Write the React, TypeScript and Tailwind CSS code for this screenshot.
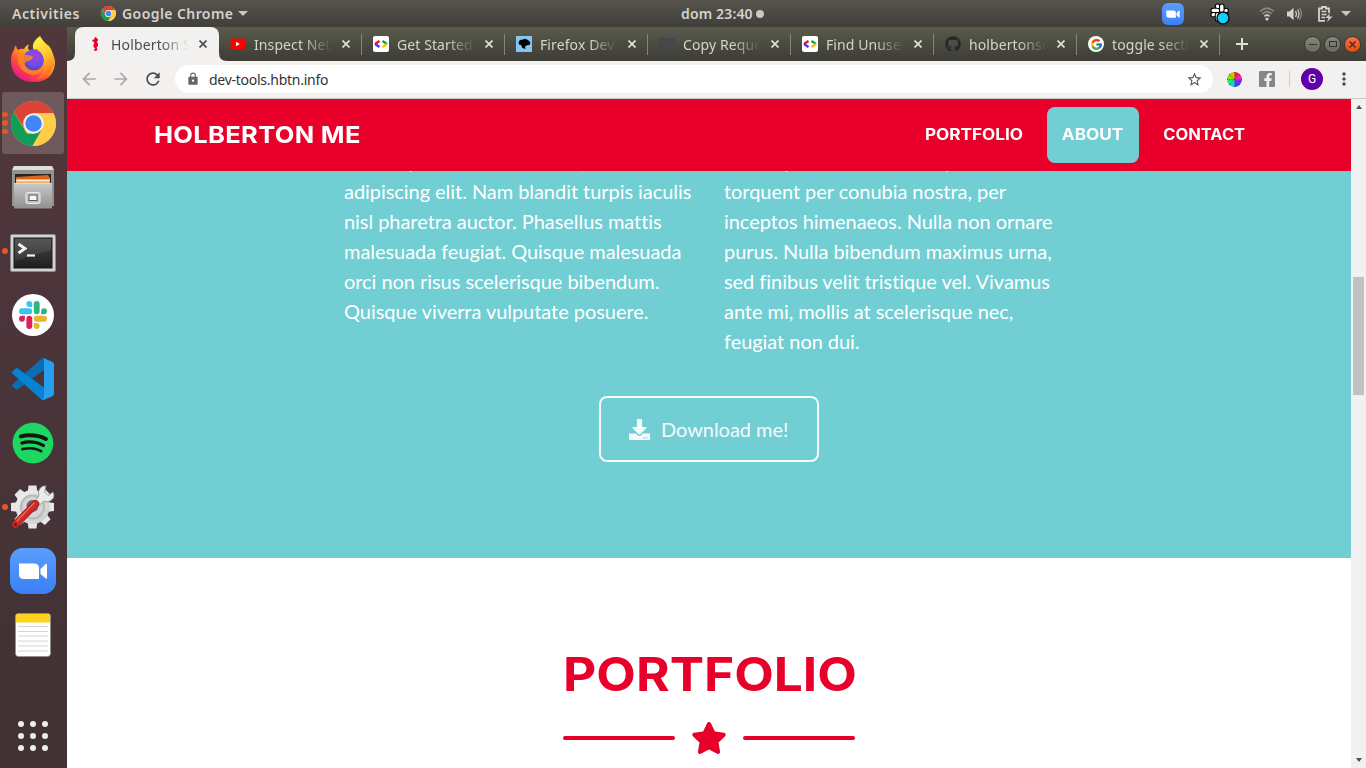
import React from "react";
import { FaDownload, FaStar, FaGithub, FaSpotify, FaFacebookF } from "react-icons/fa";
import { MdArrowBack, MdArrowForward, MdRefresh, MdLock, MdStarBorder, MdMoreVert } from "react-icons/md";
import { FcGoogle } from "react-icons/fc";

const SLACK =
  "M8.834 5.042a2.528 2.528 0 0 1-2.521-2.52A2.528 2.528 0 0 1 8.834 0a2.528 2.528 0 0 1 2.521 2.522v2.52H8.834zM8.834 6.313a2.528 2.528 0 0 1 2.521 2.521 2.528 2.528 0 0 1-2.521 2.521H2.522A2.528 2.528 0 0 1 0 8.834a2.528 2.528 0 0 1 2.522-2.521h6.312z";

function ChromeLogo({ className }: { className: string }) {
  return (
    <svg viewBox="0 0 48 48" className={className}>
      <circle cx="24" cy="24" r="24" fill="#ffcd46" />
      <path d="M3.2 12A24 24 0 0 1 44.8 12L45.3 13H24L14.5 29.5Z" fill="#db4437" />
      <path d="M3.2 12A24 24 0 0 0 23 48L33.5 29.5L24 35H17L3.2 12Z" fill="#0f9d58" />
      <path d="M24 13H45.3A24 24 0 0 1 23 48L33.5 29.5Z" fill="#ffcd46" />
      <circle cx="24" cy="24" r="11" fill="#f1f1f1" />
      <circle cx="24" cy="24" r="8.8" fill="#4285f4" />
    </svg>
  );
}

function FirefoxLogo() {
  return (
    <svg viewBox="0 0 46 48" className="h-12 w-[46px]">
      <defs>
        <linearGradient id="ffBody" x1="0.85" y1="0.1" x2="0.2" y2="0.95">
          <stop offset="0" stopColor="#fff44f" />
          <stop offset="0.35" stopColor="#ffa61c" />
          <stop offset="0.65" stopColor="#ff4f3a" />
          <stop offset="1" stopColor="#e3128d" />
        </linearGradient>
        <radialGradient id="ffGlobe" cx="0.6" cy="0.3" r="0.8">
          <stop offset="0" stopColor="#a040e0" />
          <stop offset="0.6" stopColor="#6c4fe8" />
          <stop offset="1" stopColor="#4a3aa8" />
        </radialGradient>
        <linearGradient id="ffTail" x1="0.3" y1="0" x2="0.6" y2="1">
          <stop offset="0" stopColor="#fff34a" />
          <stop offset="0.45" stopColor="#ffcc2d" />
          <stop offset="0.8" stopColor="#ff8a25" />
          <stop offset="1" stopColor="#ff5238" />
        </linearGradient>
      </defs>
      <path d="M6 10.500Q6.500 14 8 15Q11 13 14 14Q16 10 19 9.500Q17 13 19 15L37 14Q44 19 45 27Q44 47 23 47Q1 46 1 25Q1 19 4 15Q4 12 6 10.500Z" fill="url(#ffBody)" />
      <circle cx="23.500" cy="25" r="10.500" fill="url(#ffGlobe)" />
      <path d="M30 1Q34 8 39 11Q42 15 43 19Q45 24 44.500 28Q41 42 27 44Q37 36 34 25Q33 18 27 14Q22 16 23 10Q24 5 30 1Z" fill="url(#ffTail)" />
      <path d="M8 19Q12 17 16 20Q21 20 23 21.500Q23 25 18 26Q14 27 15 30Q18 35.500 25 35.500Q31 35 33.500 31Q33 39 23 40Q10 38 8 27Z" fill="#ff8524" opacity="0.850" />
    </svg>
  );
}

function FilesLogo() {
  return (
    <svg viewBox="0 0 44 46" className="h-[46px] w-11">
      <defs>
        <linearGradient id="cabinet" x1="0" y1="0" x2="0" y2="1">
          <stop offset="0" stopColor="#c8c8c8" />
          <stop offset="1" stopColor="#919191" />
        </linearGradient>
      </defs>
      <path d="M3 2H41L43 5V42H1V5Z" fill="#929292" />
      <path d="M3 2H41L42.500 6H1.500Z" fill="#dedede" />
      <rect x="4" y="10" width="36" height="10" fill="#292522" />
      <path d="M5 13L37 11L39 14V18H5Z" fill="#d9661f" />
      <path d="M5 15H39V20H5Z" fill="#f5ae62" />
      <rect x="6" y="16" width="32" height="1.200" fill="#fff1d8" />
      <rect x="3" y="19" width="38" height="25.500" rx="1" fill="url(#cabinet)" />
      <path d="M3.500 19.500H40.500" stroke="#ddd" />
      <rect x="15" y="28.500" width="14" height="11" rx="1.500" fill="#c5c5c5" stroke="#ececec" />
      <rect x="18" y="31" width="8" height="5.500" fill="#f5f5f5" stroke="#555" />
    </svg>
  );
}

function TerminalLogo() {
  return (
    <svg viewBox="0 0 46 38" className="mt-1 h-[38px] w-[46px]">
      <defs>
        <linearGradient id="term" x1="0" y1="0" x2="0" y2="1">
          <stop offset="0" stopColor="#4a4a4a" />
          <stop offset="1" stopColor="#1d1d1d" />
        </linearGradient>
      </defs>
      <rect x="0.500" y="0.500" width="45" height="37" rx="1.500" fill="#d2d2d2" stroke="#8d8d8d" />
      <rect x="4" y="4" width="38" height="30" fill="url(#term)" stroke="#191919" />
      <path d="M5 5H41V16L5 27Z" fill="#ffffff" opacity="0.080" />
      <path d="M8.500 10L15 14.500L8.500 19" fill="none" stroke="#f3f3f3" strokeWidth="2.800" />
      <path d="M17 21.500H25" stroke="#f3f3f3" strokeWidth="2.200" />
    </svg>
  );
}

function SlackLogo() {
  const petals = [
    { color: "#36c5f0", turn: "rotate(0 12 12)" },
    { color: "#2eb67d", turn: "rotate(90 12 12)" },
    { color: "#ecb22e", turn: "rotate(180 12 12)" },
    { color: "#e01e5a", turn: "rotate(270 12 12)" },
  ];
  return (
    <div className="flex size-[42px] items-center justify-center rounded-full bg-white">
      <svg viewBox="0 0 24 24" className="size-7">
        {petals.map((p) => (
          <path key={p.color} d={SLACK} fill={p.color} transform={p.turn} />
        ))}
      </svg>
    </div>
  );
}

function CodeLogo() {
  return (
    <svg viewBox="0 0 42 42" className="size-[42px]">
      <path d="M0.500 13.500L4 10.500Q5 10 6 10.700L34 31V41L31 42Q30 42 29 41L0.500 15.500Q-0.300 14.500 0.500 13.500Z" fill="#0179cb" />
      <path d="M0.500 28.500L4 31.500Q5 32 6 31.300L34 10.500V1L31 0Q30 0 29 1L0.500 26.500Q-0.300 27.500 0.500 28.500Z" fill="#0b6cb0" />
      <path d="M0.500 13.500L4 10.500Q5 10 6 10.700L34 31V41L31 42Q30 42 29 41L0.500 15.500Q-0.300 14.500 0.500 13.500Z" fill="#0683d3" />
      <path d="M32 0.300L40.500 4Q42 5 42 6V36Q42 37.500 40.500 38.200L32 41.700Q31 42 30.500 41.500Q32 40.500 32 39Z" fill="#259fee" />
    </svg>
  );
}

function SettingsLogo() {
  const teeth = [0, 45, 90, 135, 180, 225, 270, 315];
  return (
    <svg viewBox="0 0 46 46" className="size-[46px]">
      <defs>
        <linearGradient id="gear" x1="0" y1="0" x2="1" y2="1">
          <stop offset="0" stopColor="#f4f4f4" />
          <stop offset="1" stopColor="#c9c9c9" />
        </linearGradient>
      </defs>
      {teeth.map((t) => (
        <path key={t} d="M17.500 9L18.500 1.500H26.500L27.500 9Z" fill="#e6e6e6" transform={`rotate(${t} 22.500 23)`} />
      ))}
      <circle cx="22.500" cy="23" r="17" fill="url(#gear)" />
      <circle cx="22.500" cy="23" r="11.500" fill="#d6d6d6" stroke="#bcbcbc" strokeWidth="2.500" />
      <circle cx="22.500" cy="22" r="6" fill="#6a6163" />
      <path d="M20 22L29 12Q27 5 33 2L36 2L34.500 8L38 11.500L43 8Q46 14 40 17Q37 19 34 17L24 26Z" fill="#ebebeb" stroke="#8b8b8b" strokeWidth="0.800" />
      <path d="M5.500 40.500L25.500 20" stroke="#8f1717" strokeWidth="7.500" strokeLinecap="round" />
      <path d="M5.500 40.500L25.500 20" stroke="#cf2a26" strokeWidth="6.200" strokeLinecap="round" />
      <path d="M7 37L24 19" stroke="#ef6d63" strokeWidth="1.200" strokeLinecap="round" />
      <circle cx="5.500" cy="40.500" r="1.500" fill="#5e1719" />
    </svg>
  );
}

function ZoomLogo({ className }: { className: string }) {
  return (
    <svg viewBox="0 0 46 46" className={className}>
      <defs>
        <linearGradient id="zoomBg" x1="0" y1="0" x2="0" y2="1">
          <stop offset="0" stopColor="#5a9dfb" />
          <stop offset="1" stopColor="#3b80f7" />
        </linearGradient>
      </defs>
      <rect width="46" height="46" rx="12.500" fill="url(#zoomBg)" />
      <path d="M9 15.500H24Q29 15.500 29 20V31H14Q9 31 9 26.500Z" fill="#fff" />
      <path d="M30.500 21L35.500 16.200Q37 15 37 17V29.500Q37 31.500 35.500 30.300L30.500 26Z" fill="#fff" />
    </svg>
  );
}

function NotesLogo() {
  return (
    <svg viewBox="0 0 36 44" className="h-11 w-9">
      <rect x="0.500" y="0.500" width="35" height="43" rx="3" fill="#fff" stroke="#8f8f80" strokeWidth="0.700" />
      <path d="M1 9.500V3Q1 1 3 1H33Q35 1 35 3V9.500Z" fill="#fcd21c" />
      <path d="M3 13.500H33M3 18.500H33M3 23H33M3 28H33M3 33H33M3 38H33" stroke="#cfcfcf" strokeWidth="0.900" />
    </svg>
  );
}

function DockItem({ children, dots = 0, active = false }: { children: React.ReactNode; dots?: number; active?: boolean }) {
  return (
    <div className="relative flex h-16 w-[66px] shrink-0 items-center justify-center">
      <div className={active ? "flex size-[62px] items-center justify-center rounded-[3px] bg-[#6e595d]" : "flex size-[62px] items-center justify-center"}>
        {children}
      </div>
      <div className="absolute inset-y-0 left-[2px] flex flex-col items-center justify-center gap-[3px]">
        {Array.from({ length: dots }, (_, i) => (
          <span key={i} className="size-[5.500px] rounded-full bg-[#e95420]" />
        ))}
      </div>
    </div>
  );
}

function Dock() {
  return (
    <aside className="flex w-[67px] shrink-0 flex-col overflow-hidden bg-linear-to-b from-[#51373a] via-[#49343a] to-[#403233]">
      <div className="flex flex-col">
        <DockItem><div className="-mt-px"><FirefoxLogo /></div></DockItem>
        <DockItem active dots={3}><ChromeLogo className="size-[45px]" /></DockItem>
        <DockItem><FilesLogo /></DockItem>
        <DockItem dots={1}><TerminalLogo /></DockItem>
        <DockItem><SlackLogo /></DockItem>
        <DockItem><CodeLogo /></DockItem>
        <DockItem>
          <div className="flex size-10 items-center justify-center rounded-full bg-[#191414]">
            <FaSpotify className="size-[42px] shrink-0 text-[#1ed760]" />
          </div>
        </DockItem>
        <DockItem dots={1}><SettingsLogo /></DockItem>
        <DockItem><ZoomLogo className="size-[46px]" /></DockItem>
        <DockItem><NotesLogo /></DockItem>
      </div>
      <div className="mt-[54px] grid w-[66px] grid-cols-3 justify-center gap-1.5 px-[18px]">
        {Array.from({ length: 9 }, (_, i) => (
          <span key={i} className="size-1.5 rounded-full bg-[#eeeeec]" />
        ))}
      </div>
    </aside>
  );
}

function TopBar() {
  return (
    <header className="grid h-[27px] shrink-0 grid-cols-[681px_1fr] items-center bg-linear-to-b from-[#57534d] to-[#403f3a] font-['Noto_Sans','Open_Sans',sans-serif] text-[14px] font-semibold text-[#d3d2cf]">
      <div className="flex items-center">
        <span className="w-[88px] pl-3 tracking-[0.550px]">Activities</span>
        <span className="flex w-[34px] items-center"><ChromeLogo className="ml-[13px] size-[15px]" /></span>
        <span className="w-[112px] tracking-[0.420px] whitespace-nowrap">Google Chrome</span>
        <svg viewBox="0 0 10 5" className="ml-1 h-[5px] w-[10px]"><path d="M0 0H10L5 5Z" fill="#c8c7c3" /></svg>
      </div>
      <div className="flex items-center">
        <span className="w-[71px] tracking-[0.150px] whitespace-nowrap">dom 23:40</span>
        <span className="ml-1 size-2 rounded-full bg-[#c8c7c3]" />
        <span className="ml-auto flex items-center">
          <ZoomLogo className="size-[22px]" />
          <svg viewBox="0 0 22 22" className="ml-[25px] size-[22px]">
            <g transform="translate(2.500 1.500) scale(0.680)" fill="#fff" stroke="#000" strokeWidth="3" paintOrder="stroke">
              <path d={SLACK} />
              <path d={SLACK} transform="rotate(90 12 12)" />
              <path d={SLACK} transform="rotate(180 12 12)" />
              <path d={SLACK} transform="rotate(270 12 12)" />
            </g>
            <circle cx="14" cy="15" r="6" fill="#0fd1f5" stroke="#0b1115" strokeWidth="1.500" />
          </svg>
          <svg viewBox="0 0 16 14" className="ml-[28px] h-[14px] w-4">
            <path d="M1 4.500Q8 -2 15 4.500" stroke="#888680" strokeWidth="1.700" fill="none" />
            <path d="M3.300 7Q8 2.500 12.700 7" stroke="#888680" strokeWidth="1.700" fill="none" />
            <path d="M5.500 9.300Q8 7 10.500 9.300" stroke="#d3d2cf" strokeWidth="1.600" fill="none" />
            <circle cx="8" cy="12" r="1.600" fill="#d3d2cf" />
          </svg>
          <svg viewBox="0 0 16 14" className="ml-3 h-[14px] w-4" fill="none">
            <path d="M0 4.500H2.500L6.500 0.800V13.200L2.500 9.500H0Z" fill="#d3d2cf" />
            <path d="M8.500 4Q10.500 7 8.500 10M10.500 2.500Q13.500 7 10.500 11.500" stroke="#c9c8c4" strokeWidth="1.300" />
            <path d="M12.500 1Q16.500 7 12.500 13" stroke="#85837d" strokeWidth="1.300" />
          </svg>
          <svg viewBox="0 0 16 16" className="ml-3.5 size-4" fill="none">
            <path d="M12 7V2.500H9V1H5V2.500H2V14.800H8" stroke="#d3d2cf" strokeWidth="1.800" />
            <path d="M4.500 5.500H9.500M4.500 8.500H9.500M4.500 11.500H8" stroke="#d3d2cf" strokeWidth="1.700" />
            <path d="M13 7L8.500 12H11.500L10 16L15.500 10.500H12Z" fill="#d3d2cf" />
          </svg>
          <svg viewBox="0 0 10 5" className="mr-[15px] ml-[8px] h-[5px] w-[10px]"><path d="M0 0H10L5 5Z" fill="#c8c7c3" /></svg>
        </span>
      </div>
    </header>
  );
}

function SeahorseIcon() {
  return (
    <svg viewBox="0 0 16 16" className="size-4">
      <path d="M8 1L9.500 1.800L11 3.500L10.500 5.500L9.500 6L11 7.500V10L9.500 11.500L10.500 13.500L9 15L7 14.500L6.500 13L8 13.500V12L6.500 11V8.500L7.500 7L5.500 5L5 4L7 3.500Z" fill="#e6002c" />
    </svg>
  );
}

function DevtoolsIcon() {
  return (
    <svg viewBox="0 0 16 16" className="size-4">
      <rect width="16" height="16" rx="2" fill="#fff" />
      <g fill="none" strokeWidth="2.200">
        <path d="M6.500 5L2 8" stroke="#ea1515" />
        <path d="M2 8L6.500 11" stroke="#5a28ed" />
        <path d="M9.500 5L14 8" stroke="#12a04b" />
        <path d="M14 8L9.500 11" stroke="#f5c400" />
      </g>
    </svg>
  );
}

function FirefoxDevIcon() {
  return (
    <svg viewBox="0 0 16 16" className="size-4">
      <rect width="16" height="16" fill="#83c5f3" />
      <path d="M2.500 6L4 4L7 3.500L9 2.800L12 4L14.500 6.500L13.500 9L11 9.200L9 10.500L9.500 13L6.500 12L5 9L3 8.500Z" fill="#000" />
    </svg>
  );
}

function YoutubeIcon() {
  return (
    <svg viewBox="0 0 16 16" className="size-4">
      <rect x="0.500" y="2.500" width="14.500" height="11" rx="2.500" fill="#f00" />
      <path d="M6 5.800V10.200L9.800 8Z" fill="#fff" />
    </svg>
  );
}

function DarkBlockIcon() {
  return (
    <svg viewBox="0 0 16 16" className="size-4">
      <path d="M0 2H16V13H10V14H6V13H0Z" fill="#45454a" />
      <path d="M2 4H4V11M6 4H10V11H6ZM12 11V4H14V11" stroke="#4d4c4c" fill="none" />
    </svg>
  );
}

function CloseMark({ className }: { className: string }) {
  return (
    <svg viewBox="0 0 8 8" className={className}>
      <path d="M0.500 0.500L7.500 7.500M7.500 0.500L0.500 7.500" stroke="currentColor" strokeWidth="1.700" />
    </svg>
  );
}

const tabs = [
  { title: "Inspect Network", icon: <YoutubeIcon /> },
  { title: "Get Started With", icon: <DevtoolsIcon /> },
  { title: "Firefox Developer", icon: <FirefoxDevIcon /> },
  { title: "Copy Request", icon: <DarkBlockIcon /> },
  { title: "Find Unused", icon: <DevtoolsIcon /> },
  { title: "holbertonschool", icon: <FaGithub className="size-4 text-[#24292e]" /> },
  {
    title: "toggle section",
    icon: (
      <span className="flex size-4 items-center justify-center rounded-full bg-white">
        <FcGoogle className="size-[13px]" />
      </span>
    ),
  },
];

const titleFade = "mask-[linear-gradient(to_right,black_62%,transparent_97%)]";

function TabStrip() {
  return (
    <div className="flex h-[34px] shrink-0 items-end bg-linear-to-b from-[#5a5b4d] to-[#3d3c36] font-['Noto_Sans','Open_Sans',sans-serif] text-[14px]">
      <svg viewBox="0 0 8 8" className="size-2"><path d="M8 0V8H0Q8 8 8 0Z" fill="#f2f1f0" /></svg>
      <div className="flex h-[34px] w-36 items-center rounded-t-lg bg-[#f2f1f0] pl-3 text-[#4c4c4c]">
        <SeahorseIcon />
        <span className={`ml-2 w-20 overflow-hidden whitespace-nowrap tracking-[0.150px] ${titleFade}`}>Holberton School</span>
        <CloseMark className="ml-2 size-2" />
      </div>
      <svg viewBox="0 0 8 8" className="-mr-2 size-2"><path d="M0 0V8H8Q0 8 0 0Z" fill="#f2f1f0" /></svg>
      {tabs.map((t) => (
        <div key={t.title} className="flex h-[34px] w-[143px] shrink-0 items-center text-[#d4d4c8]">
          <span className="ml-[11px]">{t.icon}</span>
          <span className={`ml-2 w-20 overflow-hidden whitespace-nowrap tracking-[0.100px] ${titleFade}`}>{t.title}</span>
          <CloseMark className="ml-2 size-2 text-[#e0e0d8]" />
          <span className="ml-auto h-[21px] w-px bg-[#85857b]" />
        </div>
      ))}
      <div className="flex h-[34px] items-center pl-4">
        <svg viewBox="0 0 12 12" className="size-3"><path d="M6 0V12M0 6H12" stroke="#e0e0d8" strokeWidth="2" /></svg>
      </div>
      <div className="mr-[5px] ml-auto flex h-[34px] items-center gap-[3px]">
        <span className="flex size-[17px] items-center justify-center rounded-full border border-[#39382f] bg-linear-to-b from-[#88877f] to-[#6a6962]">
          <span className="h-px w-2 bg-[#33322d]" />
        </span>
        <span className="flex size-[17px] items-center justify-center rounded-full border border-[#39382f] bg-linear-to-b from-[#88877f] to-[#6a6962]">
          <span className="h-[6px] w-2 border border-[#33322d]" />
        </span>
        <span className="flex size-[17px] items-center justify-center rounded-full border border-[#39382f] bg-linear-to-b from-[#f47145] to-[#e4490b]">
          <svg viewBox="0 0 7 7" className="size-[7px]"><path d="M0.500 0.500L6.500 6.500M6.500 0.500L0.500 6.500" stroke="#4b2110" strokeWidth="1.200" /></svg>
        </span>
      </div>
    </div>
  );
}

function ColorWheel() {
  const wedges = ["#f02020", "#f020c8", "#8a20f0", "#2050f0", "#20c8f0", "#20e870", "#80e810", "#f0b010"];
  return (
    <svg viewBox="0 0 14 14" className="size-[15px]">
      {wedges.map((c, i) => (
        <path key={c} d="M7 7V0A7 7 0 0 1 11.950 2.050Z" fill={c} transform={`rotate(${i * 45} 7 7)`} />
      ))}
      <path d="M7 0V14M0 7H14M2 2L12 12M12 2L2 12" stroke="#222" strokeWidth="0.300" />
      <circle cx="7" cy="7" r="6.700" fill="none" stroke="#333" strokeWidth="0.800" strokeDasharray="1.260 4" strokeDashoffset="0.600" />
    </svg>
  );
}

function Toolbar() {
  return (
    <div className="flex h-[38px] shrink-0 items-center border-b border-[#c9c9c8] bg-[#f2f1f0] pb-px">
      <MdArrowBack className="ml-3 size-5 text-[#aaa9a8]" />
      <MdArrowForward className="ml-3 size-5 text-[#aaa9a8]" />
      <MdRefresh className="ml-3 size-5 text-[#4a4a4a]" />
      <div className="ml-3 flex h-7 w-[1038px] items-center rounded-full bg-white pr-2.5 pl-[11px]">
        <MdLock className="size-3.5 text-[#666]" />
        <span className="ml-[9px] font-['Noto_Sans','Open_Sans',sans-serif] text-[14px] tracking-[-0.260px] text-[#333]">dev-tools.hbtn.info</span>
        <MdStarBorder className="ml-auto size-[17px] text-[#5a5a5a]" />
      </div>
      <div className="ml-[14px]"><ColorWheel /></div>
      <span className="ml-[17px] flex size-4 items-end justify-end rounded-[1px] bg-[#868686] pr-0.5">
        <FaFacebookF className="h-3.5 w-2.5 text-[#f2f1f0]" />
      </span>
      <span className="ml-3.5 h-4 w-px bg-[#cfcfcf]" />
      <span className="ml-[11px] flex size-[22px] items-center justify-center rounded-full bg-[#6200a8] font-['Roboto',sans-serif] text-[12px] text-white">G</span>
      <MdMoreVert className="ml-[11px] size-5 text-[#4a4a4a]" />
    </div>
  );
}

function SiteNav() {
  const link = "flex h-14 items-center justify-center rounded-lg";
  return (
    <nav className="z-10 flex h-[72px] shrink-0 items-center bg-[#e8002b] pl-[87px] font-['Inter',sans-serif] text-[15.400px] font-bold text-white">
      <span className="origin-left scale-x-[1.085] text-[23.500px] tracking-[0.300px]">HOLBERTON ME</span>
      <div className="mr-[90px] ml-auto flex items-center gap-2">
        <a className={`${link} w-[131px]`}><span className="scale-x-[1.115]">PORTFOLIO</span></a>
        <a className={`${link} w-[92px] bg-[#71ced3]`}><span className="scale-x-[1.115]">ABOUT</span></a>
        <a className={`${link} w-[114px]`}><span className="scale-x-[1.070]">CONTACT</span></a>
      </div>
    </nav>
  );
}

const leftLines = [
  "Lorem ipsum dolor sit amet, consectetur",
  "adipiscing elit. Nam blandit turpis iaculis",
  "nisl pharetra auctor. Phasellus mattis",
  "malesuada feugiat. Quisque malesuada",
  "orci non risus scelerisque bibendum.",
  "Quisque viverra vulputate posuere.",
];
const rightLines = [
  "Class aptent taciti sociosqu ad litora",
  "torquent per conubia nostra, per",
  "inceptos himenaeos. Nulla non ornare",
  "purus. Nulla bibendum maximus urna,",
  "sed finibus velit tristique vel. Vivamus",
  "ante mi, mollis at scelerisque nec,",
  "feugiat non dui.",
];

function Paragraph({ lines }: { lines: string[] }) {
  return (
    <p className="w-[350px] whitespace-nowrap">
      {lines.map((l) => (
        <span key={l} className="block">{l}</span>
      ))}
    </p>
  );
}

function Page() {
  return (
    <main className="flex min-h-0 flex-1 flex-col overflow-hidden bg-white">
      <SiteNav />
      <section className="-mt-[25px] flex h-[412px] shrink-0 flex-col items-center bg-[#71ced3] font-['Lato',sans-serif] text-[20px] leading-[30px] text-white">
        <div className="flex gap-[30px] self-start pl-[277px] tracking-[-0.050px]">
          <Paragraph lines={leftLines} />
          <Paragraph lines={rightLines} />
        </div>
        <a className="mt-10 flex h-[66px] w-[220px] items-center rounded-lg border-2 border-[#f8f9fa] pl-7 text-[#f8f9fa]">
          <FaDownload className="size-[21px]" />
          <span className="ml-[11px] tracking-[-0.050px]">Download me!</span>
        </a>
      </section>
      <section className="flex flex-col items-center pt-[87px] text-[#e8002b]">
        <h2 className="ml-[2px] scale-x-[1.105] font-['Inter',sans-serif] text-[46.500px] leading-[58px] font-bold whitespace-nowrap">PORTFOLIO</h2>
        <div className="mt-[19px] flex items-center gap-4">
          <span className="h-1 w-28 rounded-full bg-[#e8002b]" />
          <FaStar className="h-8 w-9" />
          <span className="h-1 w-28 rounded-full bg-[#e8002b]" />
        </div>
      </section>
    </main>
  );
}

function Scrollbar() {
  return (
    <div className="flex w-[15px] shrink-0 flex-col items-center bg-[#f1f1f1]">
      <svg viewBox="0 0 6 4" className="mt-1.5 h-1 w-1.5"><path d="M0 4L3 0L6 4Z" fill="#505050" /></svg>
      <span className="mt-[168px] h-[118px] w-[11px] bg-[#c1c1c1]" />
      <svg viewBox="0 0 6 4" className="mt-auto mb-1.5 h-1 w-1.5"><path d="M0 0H6L3 4Z" fill="#505050" /></svg>
    </div>
  );
}

export default function App() {
  return (
    <div className="flex h-[768px] w-[1366px] flex-col overflow-hidden">
      <TopBar />
      <div className="flex min-h-0 flex-1">
        <Dock />
        <div className="flex min-w-0 flex-1 flex-col">
          <TabStrip />
          <Toolbar />
          <div className="flex min-h-0 flex-1">
            <Page />
            <Scrollbar />
          </div>
        </div>
      </div>
    </div>
  );
}
